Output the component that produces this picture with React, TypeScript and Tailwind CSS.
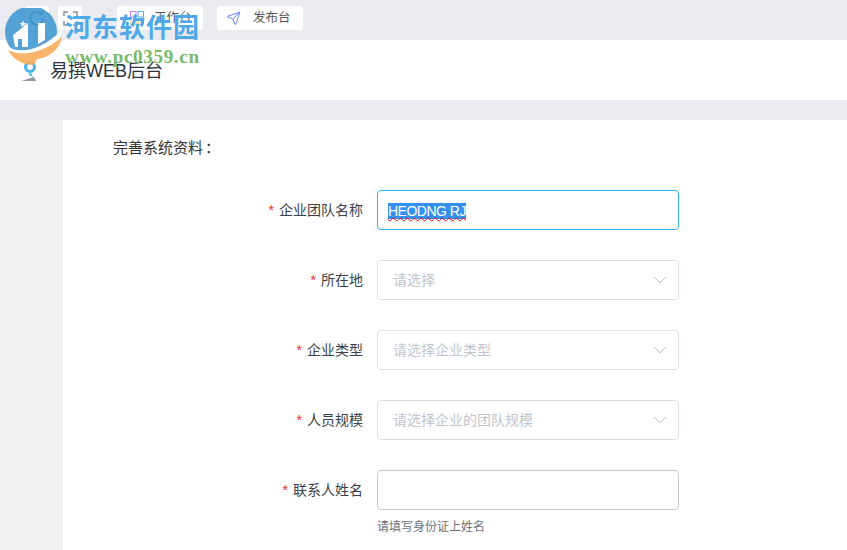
import { ChevronDown, Send } from 'lucide-react';

const font = { fontFamily: '"Liberation Sans", "Noto Sans CJK SC", sans-serif' };

const fields = [
  { label: '所在地', placeholder: '请选择' },
  { label: '企业类型', placeholder: '请选择企业类型' },
  { label: '人员规模', placeholder: '请选择企业的团队规模' },
];

function Label({ text }: { text: string }) {
  return (
    <div className="w-[363px] shrink-0 pt-[1px] text-right text-[14px] text-[#3a3f4a]">
      <span className="mr-[5px] text-[#f5222d]">*</span>
      {text}
    </div>
  );
}

function Watermark() {
  return (
    <div className="pointer-events-none absolute left-[4px] top-[8px] flex">
      <svg width="58" height="66" viewBox="0 0 58 66" className="shrink-0 opacity-[0.88]">
        <circle cx="27" cy="24" r="26" fill="#3f97d2" />
        <path d="M3 38 C14 46 36 44 58 22 C56 34 50 40 36 50 L1 50 Z" fill="#ffffff" />
        <path d="M4 42 C16 49 38 46 58 29 C56 42 44 50 33 51 L30 57 C20 57 9 52 4 42 Z" fill="#fbab57" />
        <path d="M9 27 L24 15 L24 39 L11 39 Z" fill="#ffffff" />
        <rect x="14" y="31" width="4" height="8" fill="#3f97d2" />
        <path d="M34 15 L41 15 L41 32 L34 36 Z" fill="#ffffff" />
        <path d="M19 12.5 L20 15 L22.5 15 L20.5 16.5 L21.2 19 L19 17.6 L16.8 19 L17.5 16.5 L15.5 15 L18 15 Z" fill="#ffffff" />
      </svg>
      <div className="ml-[3px]">
        <div className="text-[26px] font-bold leading-[36px] tracking-[1px] text-[#4fa8e8]" style={{ fontFamily: '"Noto Sans CJK SC", sans-serif' }}>
          河东软件园
        </div>
        <div className="mt-[3px] text-[19px] font-bold leading-[20px] tracking-[0.7px] text-[#74bb6a]" style={{ fontFamily: '"Liberation Serif", serif' }}>
          www.pc0359.cn
        </div>
      </div>
    </div>
  );
}

export default function App() {
  return (
    <div className="relative h-[550px] w-[847px] overflow-hidden bg-[#e9ebf0]" style={font}>
      {/* top bar */}
      <div className="flex h-[40px] items-start pl-[25px] pt-[6px]">
        <div className="flex h-[24px] w-[24px] items-center justify-center rounded-[2px] bg-white">
          <svg width="16" height="16" viewBox="0 0 16 16" fill="none" stroke="#4a5563" strokeWidth="1.5">
            <path d="M13 4 A6.5 6.5 0 1 0 14.5 8" />
            <path d="M13.5 1 V4.5 H10" />
          </svg>
        </div>
        <div className="ml-[9px] flex h-[24px] w-[24px] items-center justify-center rounded-[2px] bg-white">
          <svg width="15" height="15" viewBox="0 0 15 15" fill="none" stroke="#8b8f96" strokeWidth="1.5">
            <path d="M1 5 V1 H5 M10 1 H14 V5 M14 10 V14 H10 M5 14 H1 V10" />
          </svg>
        </div>
        <div className="ml-[35px] flex h-[24px] w-[86px] items-center rounded-[2px] bg-white pl-[13px] text-[12.5px] text-[#555]">
          <svg width="14" height="14" viewBox="0 0 14 14" fill="none" strokeWidth="1">
            <rect x="0.5" y="0.5" width="5.5" height="5.5" stroke="#c77dff" />
            <rect x="8" y="0.5" width="5.5" height="5.5" stroke="#5aa9f0" />
            <rect x="8" y="8" width="5.5" height="5.5" stroke="#f5c542" />
            <rect x="0.5" y="8" width="5.5" height="5.5" stroke="#f0d9a0" />
          </svg>
          <span className="ml-[10px]">工作台</span>
        </div>
        <div className="ml-[14px] flex h-[24px] w-[86px] items-center rounded-[2px] bg-white pl-[9px] text-[12.5px] text-[#555]">
          <Send size={15} color="#5b82f0" strokeWidth={1.5} />
          <span className="ml-[12px]">发布台</span>
        </div>
      </div>

      {/* header */}
      <div className="flex h-[60px] items-center bg-white pl-[20px]">
        <svg width="18" height="22" viewBox="0 0 18 22" className="mt-[2px]">
          <circle cx="10" cy="7" r="4.5" fill="none" stroke="#47b3e8" strokeWidth="3" />
          <path d="M10 11 L13 17 L9 15 Z" fill="#47b3e8" />
          <path d="M1 21 L14 17 L16 21 Z" fill="#8d98a3" />
        </svg>
        <div className="ml-[12px] pt-[3px] text-[18px] text-[#2c3340]">易撰WEB后台</div>
      </div>

      {/* body */}
      <div className="mt-[20px] flex h-[430px]">
        <div className="w-[63px] shrink-0 bg-[#f0f0f0]" />
        <div className="flex-1 bg-white pt-[18px] text-[14px]">
          <div className="pl-[50px] text-[15px] leading-[20px] text-[#333]">
            完善系统资料<span className="ml-[2px]">：</span>
          </div>

          <div className="-ml-[63px] mt-[32px] flex items-center gap-[14px]">
            <Label text="企业团队名称" />
            <div className="flex h-[40px] w-[302px] items-center rounded-[4px] border border-[#33b0f5] pl-[10px] pt-[2px]">
              <span className="bg-[#3390f0] text-[14px] leading-[16px] tracking-[-0.5px] text-white underline decoration-[#ff0000] decoration-wavy decoration-1">HEODNG RJ</span>
            </div>
          </div>

          {fields.map((f) => (
            <div key={f.label} className="-ml-[63px] mt-[30px] flex items-center gap-[14px]">
              <Label text={f.label} />
              <div className="flex h-[40px] w-[302px] items-center justify-between rounded-[4px] border border-[#dcdfe6] pl-[15px] pr-[7px] text-[#c0c4cc]">
                <span>{f.placeholder}</span>
                <ChevronDown size={22} color="#c0c4cc" strokeWidth={1.1} />
              </div>
            </div>
          ))}

          <div className="-ml-[63px] mt-[30px] flex items-center gap-[14px]">
            <Label text="联系人姓名" />
            <div className="h-[40px] w-[302px] rounded-[4px] border border-[#c6c8cc]" />
          </div>
          <div className="ml-[314px] mt-[8px] text-[12px] leading-[18px] text-[#6b7078]">请填写身份证上姓名</div>
        </div>
      </div>

      <Watermark />
    </div>
  );
}
